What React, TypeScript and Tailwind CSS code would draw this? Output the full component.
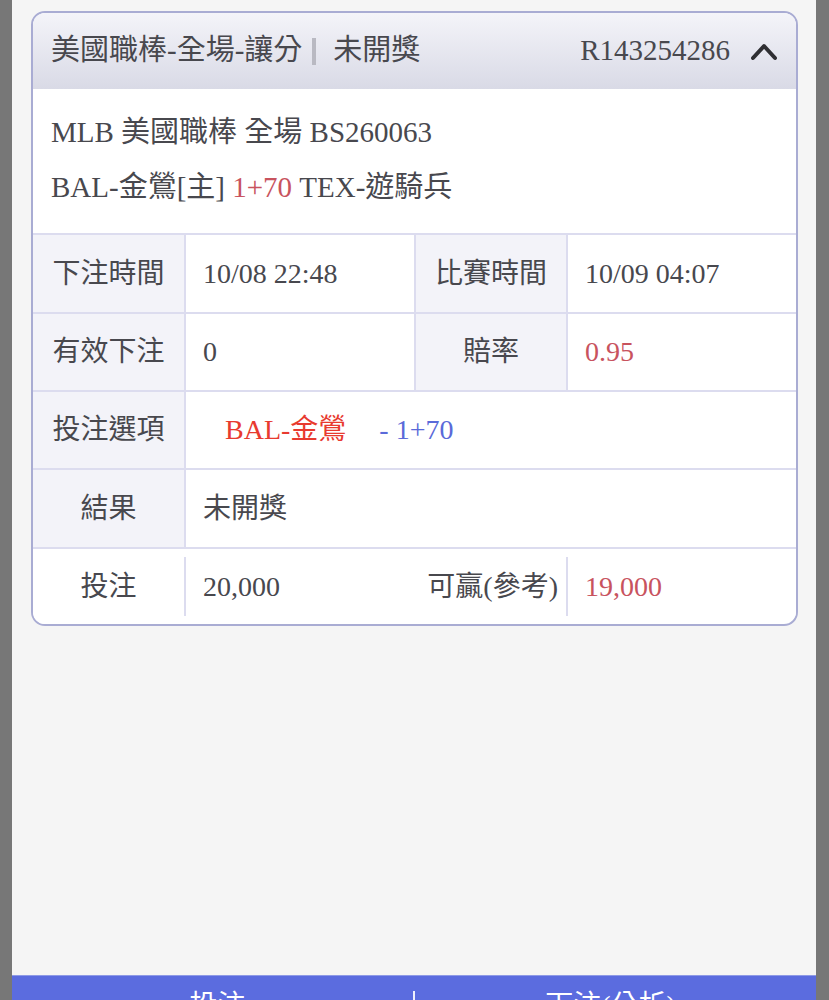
import React from 'react';

const font = { fontFamily: '"Liberation Serif", "Noto Sans CJK TC", serif' };

function Row({ children, h }: { children: React.ReactNode; h: string }) {
  return <div className={`flex border-t-2 border-[#dcdcef] ${h}`}>{children}</div>;
}

function Label({ children, plain = false, first = false }: { children: React.ReactNode; plain?: boolean; first?: boolean }) {
  return (
    <div
      className={`flex items-center justify-center ${first ? 'w-[151px]' : 'w-[152px] border-l-2 border-[#dcdcef]'} ${
        plain ? 'bg-white' : 'bg-[#f3f3f9]'
      }`}
    >
      {children}
    </div>
  );
}

function Value({ children, grow = false, plain = false }: { children: React.ReactNode; grow?: boolean; plain?: boolean }) {
  return (
    <div
      className={`flex items-center border-l-2 border-[#dcdcef] bg-white pl-[17px] ${grow ? 'flex-1' : 'w-[230px]'} ${
        plain ? 'my-[8px]' : ''
      }`}
    >
      {children}
    </div>
  );
}

export default function App() {
  return (
    <div className="flex h-[1000px] overflow-hidden bg-[#777777] pl-[12px] pr-[13px] text-[28px] text-[#48484e]" style={font}>
      <div className="flex flex-1 flex-col bg-[#f5f5f5]">
        <div className="flex-1 pl-[19px] pr-[18px] pt-[11px]">
          <div className="overflow-hidden rounded-[14px] border-2 border-[#a9acd3] bg-white">
            <header className="flex h-[76px] items-center bg-gradient-to-b from-[#f4f4f9] to-[#d9dae6] pl-[18px] pr-[18px] text-[29px]">
              <span>美國職棒-全場-讓分</span>
              <span className="ml-[10px] h-[27px] w-[4px] bg-[#b9b9c2]" />
              <span className="ml-[17px]">未開獎</span>
              <span className="ml-auto">R143254286</span>
              <svg className="ml-[20px]" width="28" height="20" viewBox="0 0 28 20">
                <path d="M3 17 L14 5 L25 17" fill="none" stroke="#2f2f33" strokeWidth="4" strokeLinecap="round" strokeLinejoin="round" />
              </svg>
            </header>

            <section className="pl-[18px] pb-[18px] pt-[16px] text-[29px] leading-[55px]">
              <div>MLB 美國職棒 全場 BS260063</div>
              <div>
                BAL-金鶯[主] <span className="text-[#c8535e]">1+70</span> TEX-遊騎兵
              </div>
            </section>

            <Row h="h-[79px]">
              <Label first>下注時間</Label>
              <Value>10/08 22:48</Value>
              <Label>比賽時間</Label>
              <Value grow>10/09 04:07</Value>
            </Row>
            <Row h="h-[78px]">
              <Label first>有效下注</Label>
              <Value>0</Value>
              <Label>賠率</Label>
              <Value grow>
                <span className="text-[#c8535e]">0.95</span>
              </Value>
            </Row>
            <Row h="h-[78px]">
              <Label first>投注選項</Label>
              <Value grow>
                <span className="ml-[22px] text-[#e83a2f]">BAL-金鶯</span>
                <span className="ml-[33px] text-[#5a6ad9]">- 1+70</span>
              </Value>
            </Row>
            <Row h="h-[79px]">
              <Label first>結果</Label>
              <Value grow>未開獎</Value>
            </Row>
            <Row h="h-[77px]">
              <Label first plain>
                投注
              </Label>
              <Value plain>20,000</Value>
              <div className="flex w-[152px] items-center justify-end whitespace-nowrap bg-white pr-[8px]">可贏(參考)</div>
              <Value grow plain>
                <span className="text-[#c8535e]">19,000</span>
              </Value>
            </Row>
          </div>
        </div>

        <div className="h-[25px] overflow-hidden border-t border-[#8e9ae6] bg-[#5b6cdf] text-white">
          <div className="flex h-[60px] items-center">
            <div className="flex flex-1 justify-center pl-[10px]">投注</div>
            <span className="h-[30px] w-[2px] bg-white/90" />
            <div className="flex flex-1 justify-center pr-[10px]">下注(分析)</div>
          </div>
        </div>
      </div>
    </div>
  );
}
